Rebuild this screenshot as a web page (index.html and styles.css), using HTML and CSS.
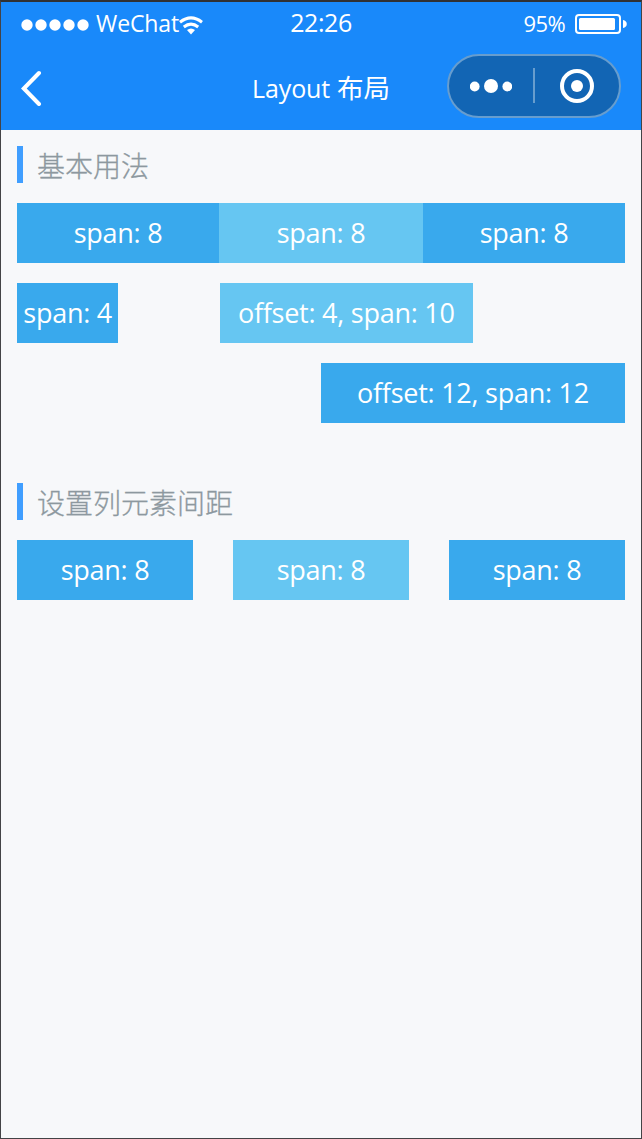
FILE: index.html
```html
<!DOCTYPE html>
<html lang="zh-CN">
<head>
<meta charset="utf-8">
<title>Layout 布局</title>
<link rel="stylesheet" href="styles.css">
</head>
<body>
<div class="phone">
  <header class="header">
    <div class="status">
      <div class="status-left">
        <svg class="signal" width="68" height="12" viewBox="0 0 68 12"><g fill="#fff"><circle cx="6" cy="6" r="5.7"/><circle cx="20" cy="6" r="5.7"/><circle cx="34" cy="6" r="5.7"/><circle cx="48" cy="6" r="5.7"/><circle cx="62" cy="6" r="5.7"/></g></svg>
        <span class="carrier">WeChat</span>
        <svg class="wifi" width="24" height="19" viewBox="0 0 24 19"><g fill="none" stroke="#fff" stroke-width="3"><path d="M1 6.2Q12 -2.4 23 6.2"/><path d="M4.8 11Q12 5.2 19.2 11"/></g><path fill="#fff" d="M8 14Q12 11 16 14L12 18.5Z"/></svg>
      </div>
      <span class="time">22:26</span>
      <div class="status-right">
        <span class="percent">95%</span>
        <svg class="battery" width="53" height="20" viewBox="0 0 53 20"><rect x="1" y="1" width="44" height="18" rx="3" fill="none" stroke="#fff" stroke-width="2"/><rect x="4" y="4" width="36" height="12" rx="1.5" fill="#fff"/><path fill="#fff" d="M48 6C53 6.500 53 13.500 48 14Z"/></svg>
      </div>
    </div>
    <div class="nav">
      <svg class="back" width="22" height="36" viewBox="0 0 22 36"><path d="M18 3L2.800 18.500L18 34" fill="none" stroke="#fff" stroke-width="4" stroke-linecap="round" stroke-linejoin="miter"/></svg>
      <h1 class="title"><span class="latin">Layout</span> 布局</h1>
      <div class="capsule">
        <svg class="dots" width="42" height="14" viewBox="0 0 42 14"><g fill="#fff"><circle cx="4.700" cy="7.500" r="4.900"/><circle cx="21" cy="7" r="7"/><circle cx="37.300" cy="7.500" r="4.900"/></g></svg>
        <span class="divider"></span>
        <svg class="target" width="34" height="34" viewBox="0 0 34 34"><circle cx="17" cy="17" r="15" fill="none" stroke="#fff" stroke-width="4"/><circle cx="17" cy="17" r="6" fill="#fff"/></svg>
      </div>
    </div>
  </header>
  <main class="content">
    <section class="section">
      <h2 class="heading">基本用法</h2>
      <div class="row thirds">
        <div class="col dark">span: 8</div>
        <div class="col light">span: 8</div>
        <div class="col dark">span: 8</div>
      </div>
      <div class="row grid">
        <div class="col dark span-4">span: 4</div>
        <div class="col light offset-4 span-10">offset: 4, span: 10</div>
      </div>
      <div class="row grid">
        <div class="col dark offset-12 span-12">offset: 12, span: 12</div>
      </div>
    </section>
    <section class="section">
      <h2 class="heading">设置列元素间距</h2>
      <div class="row gutter">
        <div class="col dark">span: 8</div>
        <div class="col light">span: 8</div>
        <div class="col dark">span: 8</div>
      </div>
    </section>
  </main>
</div>
</body>
</html>
```

FILE: styles.css
```css
* { box-sizing: border-box; }
body { margin: 0; }
.phone {
  width: 642px;
  height: 1139px;
  border: 1px solid #434346;
  border-top: 2px solid #303133;
  background: #f7f8fa;
  font-family: "Open Sans", "Noto Sans CJK SC", sans-serif;
  overflow: hidden;
}
svg { display: block; flex: none; }
.header { height: 128px; background: #1989fa; color: #fff; }
.status {
  display: grid;
  grid-template-columns: 1fr auto 1fr;
  align-items: center;
  height: 40px;
  padding: 0 13px 0 20px;
}
.status-left, .status-right { display: flex; align-items: center; height: 40px; }
.signal { margin-top: 6px; }
.carrier { margin-left: 7px; width: 83px; font-size: 23px; letter-spacing: -0.1px; line-height: 40px; padding-top: 1px; white-space: nowrap; }
.wifi { margin-top: 6px; }
.battery { margin-top: 3px; }
.time { font-size: 25px; letter-spacing: -0.4px; line-height: 40px; margin-right: 7px; }
.status-right { justify-content: flex-end; }
.percent { font-size: 22px; letter-spacing: -0.6px; margin-right: 10px; line-height: 40px; padding-top: 2px; }
.nav {
  display: grid;
  grid-template-columns: 1fr auto 1fr;
  align-items: start;
  height: 88px;
  padding: 12px 20px 0;
}
.back { margin-top: 16px; }
.title { margin: 0; font-size: 26.5px; font-weight: 400; line-height: 64px; padding-top: 2px; }
.latin { font-size: 25px; letter-spacing: -0.1px; }
.capsule {
  display: flex;
  align-items: center;
  justify-self: end;
  width: 174px;
  height: 64px;
  padding: 0 25px 0 21px;
  border: 2px solid #679dce;
  border-radius: 32px;
  background: #1265b4;
}
.divider { width: 2px; height: 35px; margin: 0 25px 1px 21px; background: #679dce; }
.content { padding: 16px; }
.section { margin-bottom: 60px; }
.heading {
  height: 37px;
  margin: 0 0 20px;
  padding-left: 14px;
  border-left: 6px solid #409eff;
  color: #8d989f;
  font-family: "Noto Sans CJK SC", sans-serif;
  font-size: 28px;
  font-weight: 300;
  line-height: 39px;
  -webkit-text-stroke: 0.3px #8d989f;
}
.row { display: grid; margin-bottom: 20px; }
.thirds { grid-template-columns: 202px 204px 202px; }
.grid { grid-template-columns: repeat(24, 1fr); }
.gutter { grid-template-columns: repeat(3, 1fr); gap: 40px; }
.col {
  min-width: 0;
  height: 60px;
  color: #fff;
  font-size: 27px;
  letter-spacing: -0.25px;
  line-height: 60px;
  text-align: center;
  white-space: nowrap;
}
.dark { background: #39a9ed; }
.light { background: #66c6f2; }
.span-4 { grid-column: 1 / span 4; }
.offset-4 { grid-column: 9 / span 10; }
.offset-12 { grid-column: 13 / span 12; }
```
